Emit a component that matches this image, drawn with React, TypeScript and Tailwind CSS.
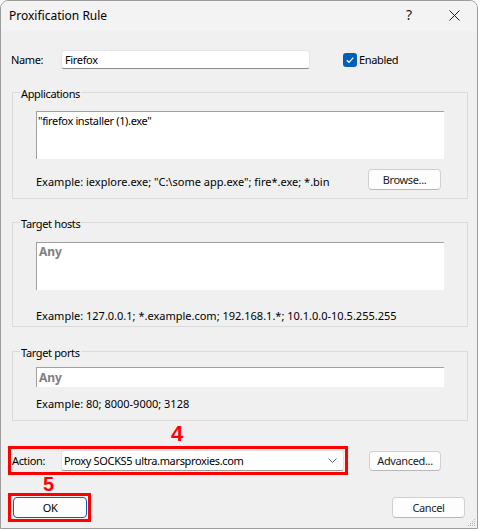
import React from "react";

const font = { fontFamily: '"Noto Sans", "Open Sans", sans-serif' };
const lbl = "text-[11px] tracking-[-0.35px]";

function Btn({ label, className = "" }: { label: string; className?: string }) {
  return (
    <div
      className={
        "flex items-center justify-center rounded-[4px] border border-[#d0d0d0] border-b-[#b8b8b8] bg-[#fdfdfd] leading-none text-[#1b1b1b] " +
        lbl +
        " " +
        className
      }
    >
      {label}
    </div>
  );
}

function Group({ title, children, className = "" }: { title: string; children: React.ReactNode; className?: string }) {
  return (
    <fieldset className={"w-[456px] border border-[#dadada] " + className}>
      <legend className={"ml-[7px] px-[1px] leading-[16px] text-[#000] " + lbl}>
        <span className="relative top-[1.5px]">{title}</span>
      </legend>
      <div className="px-[23px]">{children}</div>
    </fieldset>
  );
}

export default function App() {
  return (
    <div className="relative w-[478px] h-[531px] bg-white" style={font}>
      <div className="relative flex h-[529px] w-[478px] flex-col overflow-hidden rounded-t-[8px] border border-[#9c9c9c] bg-[#f0f0f0]">
        {/* title bar */}
        <div className="flex h-[30px] shrink-0 items-center bg-[#f3f3f3] pl-[8px] text-[12px] text-[#000]">
          <span className="mt-[-1px]">Proxification Rule</span>
          <span className="ml-auto mr-[37px] mt-[-2px] text-[14px] leading-none text-[#1a1a1a]">?</span>
          <svg width="11" height="11" viewBox="0 0 11 11" className="mr-[17px] mt-[-1px]">
            <path d="M0.5 0.5 L10.5 10.5 M10.5 0.5 L0.5 10.5" stroke="#1a1a1a" strokeWidth="1" fill="none" />
          </svg>
        </div>

        {/* body */}
        <div className="flex flex-1 flex-col pl-[11px] text-[12px] leading-[16px] text-[#000]">
          {/* Name row */}
          <div className={"-ml-px mt-[19px] flex h-[19px] items-center " + lbl}>
            <span className="w-[50px]">Name:</span>
            <div className="flex h-[19px] w-[249px] items-center rounded-[3px] border border-[#e6e6e6] border-b-[#8a8a8a] bg-white pl-[3px]">
              Firefox
            </div>
            <div className="ml-[33px] flex h-[14px] w-[14px] items-center justify-center rounded-[3px] bg-[#005fb8]">
              <svg width="10" height="10" viewBox="0 0 10 10">
                <path d="M1.8 5.2 L4 7.3 L8.3 2.6" stroke="#fff" strokeWidth="1.2" fill="none" />
              </svg>
            </div>
            <span className="ml-[2px]">Enabled</span>
          </div>

          {/* Applications */}
          <Group title="Applications" className="mt-[15px]">
            <div className={"mt-[11px] h-[48px] w-[408px] border-l border-t border-[#a0a0a0] bg-white pl-[1px] pt-[1px] " + lbl}>
              "firefox installer (1).exe"
            </div>
            <div className="mt-[10px] flex h-[21px] items-start justify-between">
              <span className="mt-[5px] text-[11px]">Example: iexplore.exe; "C:\some app.exe"; fire*.exe; *.bin</span>
              <Btn label="Browse..." className="mr-[3px] h-[21px] w-[73px]" />
            </div>
            <div className="h-[8px]" />
          </Group>

          {/* Target hosts */}
          <Group title="Target hosts" className="mt-[15px]">
            <div className="mt-[12px] h-[48px] w-[408px] border-l border-t border-[#a0a0a0] bg-white pl-[2px] pt-[1px] font-bold text-[#808080]">
              Any
            </div>
            <div className="mt-[18px] h-[16px] text-[11px]">
              Example: 127.0.0.1; *.example.com; 192.168.1.*; 10.1.0.0-10.5.255.255
            </div>
            <div className="h-[2px]" />
          </Group>

          {/* Target ports */}
          <Group title="Target ports" className="mt-[16px]">
            <div className="mt-[8px] flex h-[20px] w-[408px] items-center border-l border-t border-[#a0a0a0] bg-white pl-[2px] font-bold text-[#808080]">
              Any
            </div>
            <div className="mt-[9px] h-[16px] text-[11px]">Example: 80; 8000-9000; 3128</div>
            <div className="h-[8px]" />
          </Group>

          {/* Action row */}
          <div className="-ml-[4px] mt-[25px] flex items-center">
            <div className={"flex h-[29px] w-[340px] items-center border-[3px] border-[#ff0000] pl-[1px] " + lbl}>
              <span className="w-[49px]">Action:</span>
              <div className="flex h-[21px] w-[283px] items-center rounded-[3px] border border-[#e3e3e3] border-b-[#9a9a9a] bg-white pl-[2px]">
                <span>Proxy SOCKS5 ultra.marsproxies.com</span>
                <svg width="9" height="5" viewBox="0 0 9 5" className="ml-auto mr-[6px]">
                  <path d="M0.5 0.5 L4.5 4.5 L8.5 0.5" stroke="#5f5f5f" strokeWidth="1" fill="none" />
                </svg>
              </div>
            </div>
            <Btn label="Advanced..." className="ml-[21px] h-[20px] w-[72px]" />
          </div>

          {/* OK / Cancel */}
          <div className="-ml-[4px] mt-[18px] flex w-[457px] items-center justify-between">
            <div className="flex h-[29px] w-[83px] items-center border-[3px] border-[#ff0000] pl-[2px]">
              <div
                className={
                  "flex h-[21px] w-[74px] items-center justify-center rounded-[4px] border border-[#0067c0] bg-[#fdfdfd] leading-none " +
                  lbl
                }
              >
                OK
              </div>
            </div>
            <Btn label="Cancel" className="h-[21px] w-[73px]" />
          </div>
        </div>

        {/* resize grip */}
        <svg width="10" height="10" viewBox="0 0 10 10" className="absolute bottom-[1px] right-[1px]">
          <g fill="#b5b5b5">
            <rect x="8" y="2" width="1" height="1" />
            <rect x="6" y="4" width="1" height="1" />
            <rect x="8" y="4" width="1" height="1" />
            <rect x="4" y="6" width="1" height="1" />
            <rect x="6" y="6" width="1" height="1" />
            <rect x="8" y="6" width="1" height="1" />
            <rect x="2" y="8" width="1" height="1" />
            <rect x="4" y="8" width="1" height="1" />
            <rect x="6" y="8" width="1" height="1" />
            <rect x="8" y="8" width="1" height="1" />
          </g>
        </svg>
      </div>

      {/* annotation digits */}
      <span
        className="absolute left-[171px] top-[423px] text-[22px] font-bold leading-none text-[#ff0000]"
        style={{ fontFamily: '"Liberation Sans", Arial, sans-serif' }}
      >
        4
      </span>
      <span
        className="absolute left-[43px] top-[474px] text-[20px] font-bold leading-none text-[#ff0000]"
        style={{ fontFamily: '"Liberation Sans", Arial, sans-serif' }}
      >
        5
      </span>
    </div>
  );
}
